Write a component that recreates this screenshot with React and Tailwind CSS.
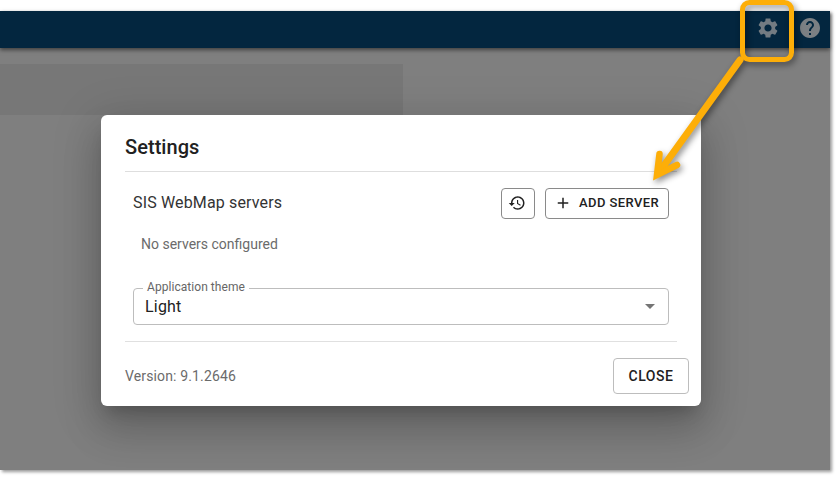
function Settings({ className }) {
  return (
    <svg viewBox="0 0 24 24" fill="currentColor" className={className}>
      <path d="M19.14 12.94c.04-.3.06-.61.06-.94 0-.32-.02-.64-.07-.94l2.03-1.58c.18-.14.23-.41.12-.61l-1.92-3.32c-.12-.22-.37-.29-.59-.22l-2.39.96c-.5-.38-1.03-.7-1.62-.94l-.36-2.54c-.04-.24-.24-.41-.48-.41h-3.84c-.24 0-.43.17-.47.41l-.36 2.54c-.59.24-1.13.57-1.62.94l-2.39-.96c-.22-.08-.47 0-.59.22L2.74 8.87c-.12.21-.08.47.12.61l2.03 1.58c-.05.3-.09.63-.09.94s.02.64.07.94l-2.03 1.58c-.18.14-.23.41-.12.61l1.92 3.32c.12.22.37.29.59.22l2.39-.96c.5.38 1.03.7 1.62.94l.36 2.54c.05.24.24.41.48.41h3.84c.24 0 .44-.17.47-.41l.36-2.54c.59-.24 1.13-.56 1.62-.94l2.39.96c.22.08.47 0 .59-.22l1.92-3.32c.12-.22.07-.47-.12-.61l-2.01-1.58zM12 15.6c-1.98 0-3.6-1.62-3.6-3.6s1.62-3.6 3.6-3.6 3.6 1.62 3.6 3.6-1.62 3.6-3.6 3.6z" />
    </svg>
  );
}

function Help({ className }) {
  return (
    <svg viewBox="0 0 24 24" fill="currentColor" className={className}>
      <path d="M12 2C6.48 2 2 6.48 2 12s4.48 10 10 10 10-4.48 10-10S17.52 2 12 2zm1 17h-2v-2h2v2zm2.07-7.75l-.9.92C13.45 12.9 13 13.5 13 15h-2v-.5c0-1.1.45-2.1 1.17-2.83l1.24-1.26c.37-.36.59-.86.59-1.41 0-1.1-.9-2-2-2s-2 .9-2 2H8c0-2.21 1.79-4 4-4s4 1.79 4 4c0 .88-.36 1.68-.93 2.25z" />
    </svg>
  );
}

function History({ className }) {
  return (
    <svg viewBox="0 0 24 24" fill="currentColor" className={className}>
      <path d="M13 3c-4.97 0-9 4.03-9 9H1l3.89 3.89.07.14L9 12H6c0-3.87 3.13-7 7-7s7 3.13 7 7-3.13 7-7 7c-1.93 0-3.68-.79-4.94-2.06l-1.42 1.42C8.27 19.99 10.51 21 13 21c4.97 0 9-4.03 9-9s-4.03-9-9-9zm-1 5v5l4.28 2.54.72-1.21-3.5-2.08V8H12z" />
    </svg>
  );
}

function Plus({ className }) {
  return (
    <svg viewBox="0 0 24 24" fill="currentColor" className={className}>
      <path d="M19 13h-6v6h-2v-6H5v-2h6V5h2v6h6v2z" />
    </svg>
  );
}

function Annotation() {
  return (
    <svg
      width="837"
      height="477"
      viewBox="0 0 837 477"
      className="absolute left-0 top-0 pointer-events-none drop-shadow-[2px_3px_3px_rgba(0,0,0,0.45)]"
    >
      <rect x="742.5" y="2.5" width="49" height="57" rx="7" fill="none" stroke="#fdae08" strokeWidth="5" />
      <path d="M740 60 L660 171" fill="none" stroke="#fdae08" strokeWidth="7" strokeLinecap="round" />
      <path d="M659.5 154 L657 175 L677 165" fill="none" stroke="#fdae08" strokeWidth="6.5" strokeLinecap="round" strokeLinejoin="miter" />
    </svg>
  );
}

function SettingsDialog() {
  return (
    <div className="absolute left-[101px] top-[115px] w-[600px] h-[291px] bg-white rounded-[6px] shadow-[0_11px_15px_-7px_rgba(0,0,0,0.2),0_24px_38px_3px_rgba(0,0,0,0.14),0_9px_46px_8px_rgba(0,0,0,0.12)] pt-4 px-6 flex flex-col">
      <h2 className="text-[20px] leading-[32px] font-medium tracking-[0.05px] text-[#212121] h-[41px] border-b border-[#dedede] w-[552px]">
        Settings
      </h2>

      <div className="flex items-center justify-between pl-2 pr-2 mt-[15px] h-[32px] w-[552px]">
        <span className="text-[16px] text-[#333333] tracking-[0.15px]">SIS WebMap servers</span>
        <div className="flex items-center gap-[10px]">
          <button className="w-[34px] h-[31px] flex items-center justify-center pr-[2px] border border-[#8a8a8a] rounded-[4px] text-[#212121]">
            <History className="w-[18px] h-[18px]" />
          </button>
          <button className="w-[124px] h-[31px] flex items-center pl-[8px] border border-[#8a8a8a] rounded-[4px] text-[#212121]">
            <Plus className="w-[18px] h-[18px]" />
            <span className="ml-[7px] text-[13px] font-medium tracking-[0.4px]">ADD SERVER</span>
          </button>
        </div>
      </div>

      <p className="mt-[15px] ml-4 text-[14px] leading-[20px] text-[#6b6b6b]">No servers configured</p>

      {/* Theme select */}
      <div className="relative mt-[34px] ml-2 w-[536px] h-[37px] border border-[#bdbdbd] rounded-[4px] flex items-center justify-between pl-[11px] pr-[13px]">
        <span className="absolute left-[9px] -top-[10px] bg-white px-[4px] text-[12px] leading-[16px] tracking-[0.05px] text-[#666666]">
          Application theme
        </span>
        <span className="text-[16px] text-[#212121] tracking-[0.2px]">Light</span>
        <span className="w-0 h-0 border-l-[5px] border-r-[5px] border-t-[5px] border-l-transparent border-r-transparent border-t-[#757575]" />
      </div>

      <div className="mt-[16px] w-[552px] border-t border-[#e0e0e0]" />

      <div className="flex items-center justify-between mt-[16px] w-[564px]">
        <span className="text-[14px] text-[#6b6b6b] tracking-[0.14px]">Version: 9.1.2646</span>
        <button className="w-[76px] h-[36px] border border-[#bdbdbd] rounded-[4px] text-[14px] font-medium tracking-[0.5px] text-[#212121]">
          CLOSE
        </button>
      </div>
    </div>
  );
}

export default function App() {
  return (
    <div className="relative w-[837px] h-[477px] bg-white overflow-hidden font-['Roboto',sans-serif]">
      <div className="mt-[11px] w-[830px] h-[459px] flex flex-col bg-[#7f7f7f] shadow-[2px_2px_3px_rgba(0,0,0,0.4)] absolute top-0 left-0">
        <header className="h-[37px] shrink-0 bg-[#03263f] flex items-center justify-end pr-[8px] pb-[3px] gap-[18px] shadow-[0_2px_4px_rgba(0,0,0,0.5)]">
          <Settings className="w-[24px] h-[24px] text-[#737b82]" />
          <Help className="w-[24px] h-[24px] text-[#7b7f83]" />
        </header>
        <div className="mt-[16px] w-[403px] h-[51px] bg-[#777777]" />
      </div>
      <SettingsDialog />
      <Annotation />
    </div>
  );
}
